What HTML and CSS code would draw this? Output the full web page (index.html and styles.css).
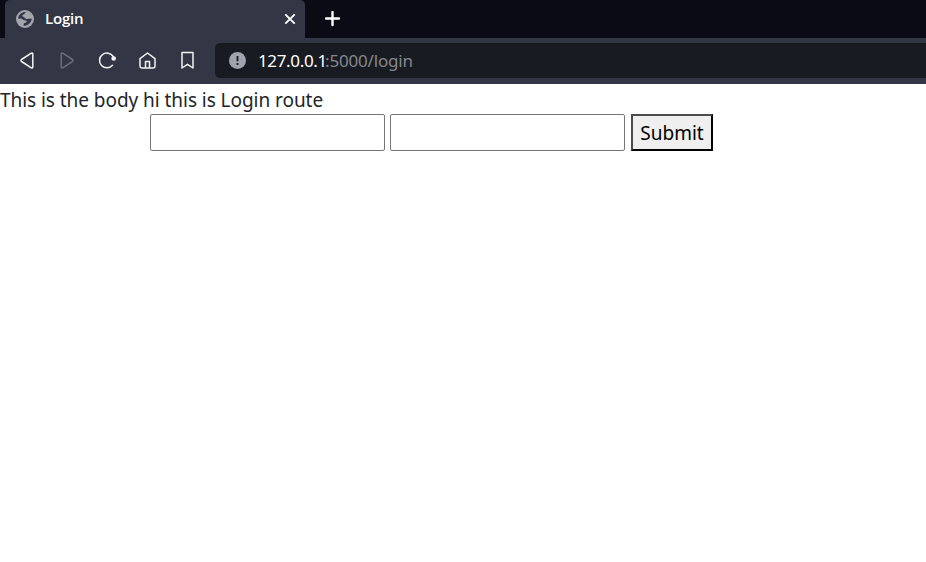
FILE: index.html
```html
<!DOCTYPE html>
<html lang="en">
<head>
<meta charset="utf-8">
<title>Login</title>
<link rel="stylesheet" href="styles.css">
</head>
<body>
<header class="browser">
  <div class="tabs">
    <div class="tab">
      <svg class="globe" width="18" height="18" viewBox="0 0 18 18"><circle cx="9" cy="9" r="9" fill="#a3a5ad"/><path d="M11 2.200C8.500 2 9 4 7.500 4.500 6 5 5.800 6.300 7.300 6.800c1.700.5 1.300 2 3 2.200 1.500.2 3.200-.3 5.500-.5-.1 2.500-1.500 4.800-4 6.200-1.500.8-3 1.100-4.300.9.200-1.200-.1-2 1-2.500 1.200-.5 2.300-.7 2.200-1.700-.1-1.200-1.700-1-2.700-1.200C6.500 9.900 6.600 8.600 5 8.500L2.200 8.700C2.300 5.500 5 2.300 8.500 2z" fill="#333645"/></svg>
      <span class="tab-title">Login</span>
      <svg width="12" height="12" viewBox="0 0 12 12"><path d="M1.300 1.300l9.400 9.400M10.700 1.300l-9.400 9.400" stroke="#fff" stroke-width="1.900"/></svg>
    </div>
    <svg class="plus" width="16" height="16" viewBox="0 0 16 16"><path d="M7.500 1v13M1 7.500h13" stroke="#fff" stroke-width="2.400" stroke-linecap="round"/></svg>
  </div>
  <div class="toolbar">
    <nav class="actions">
      <svg width="20" height="20" viewBox="0 0 20 20"><path d="M15.800 3v13q0 1.500-1.500.8L4.500 10.500q-1.200-1 0-2l9.800-6.300q1.500-.7 1.500.8z" class="line"/></svg>
      <svg width="20" height="20" viewBox="0 0 20 20"><path d="M4.200 3v13q0 1.500 1.500.8l9.800-6.300q1.200-1 0-2L5.700 2.200Q4.200 1.500 4.200 3z" class="line dim"/></svg>
      <svg width="20" height="20" viewBox="0 0 20 20"><path d="M15.500 14.300A7.400 7.400 0 1 1 16.200 5.500" class="line"/><circle cx="16.700" cy="7.500" r="2.300" fill="#f2f3f7"/></svg>
      <svg width="20" height="20" viewBox="0 0 20 20"><path d="M3 7.700L10.500 2 18 7.700v7.600q0 1.700-1.700 1.700H4.700Q3 17 3 15.300zM8.500 17v-6.500h4V17" class="line"/></svg>
      <svg width="20" height="20" viewBox="0 0 20 20"><path d="M5 1.500h11V17l-5.500-3.700L5 17z" class="line"/></svg>
    </nav>
    <div class="address">
      <svg width="17" height="17" viewBox="0 0 17 17"><circle cx="8.500" cy="8.500" r="8.500" fill="#a1a4ac"/><path d="M8.500 4v5.300M8.500 11v2" stroke="#191b22" stroke-width="1.800"/></svg>
      <span class="url"><span class="host">127.0.0.1</span><span class="path">:5000/login</span></span>
    </div>
  </div>
</header>
<main>
  <p class="message">This is the body hi this is Login route</p>
  <form class="login"><input type="text"><input type="password"><button type="button">Submit</button></form>
</main>
</body>
</html>
```
FILE: styles.css
```css
* { box-sizing: border-box; }
body { margin: 0; background: #fff; color: #212529; font-family: "Noto Sans", sans-serif; overflow: hidden; }
svg { display: block; flex: none; }
.browser { background: #333645; height: 84px; }
.tabs { height: 38px; background: #0b0b16; display: flex; align-items: center; padding-left: 5px; }
.tab { width: 300px; height: 38px; background: #333645; border-radius: 5px 5px 0 0; display: flex; align-items: center; padding: 0 9px 0 11px; }
.tab-title { flex: 1; margin: -2px 0 0 11px; color: #fff; font: 600 15px/20px "Open Sans", sans-serif; letter-spacing: -.2px; }
.plus { margin-left: 20px; }
.toolbar { height: 46px; display: flex; align-items: center; padding-left: 17px; }
.actions { display: flex; gap: 20px; width: 198px; }
.line { fill: none; stroke: #f2f3f7; stroke-width: 1.5; stroke-linejoin: round; stroke-linecap: round; }
.dim { stroke: #6b6e7a; }
.address { flex: 1; height: 35px; margin-top: -1px; background: #191b22; border-radius: 5px 0 0 5px; display: flex; align-items: center; padding-left: 14px; }
.url { display: flex; margin-left: 12px; font-size: 17px; line-height: 24px; }
.host { color: #fff; width: 67px; letter-spacing: -.35px; }
.path { color: #85878c; letter-spacing: -.17px; }
.message { margin: 0; height: 30px; font-size: 19px; line-height: 32px; letter-spacing: -.05px; white-space: nowrap; }
.login { display: flex; padding-left: 150px; }
input { width: 235px; height: 37px; margin: 0 5px 0 0; border: 1px solid #767676; border-radius: 2px; background: #fff; }
button { width: 82px; height: 37px; margin: 0 0 0 1px; padding: 0; border: 2px solid; border-color: #4c4c4c #000 #000 #4c4c4c; border-radius: 0; background: #efefef; color: #000; font: 19px/30px "Noto Sans", sans-serif; }
```
